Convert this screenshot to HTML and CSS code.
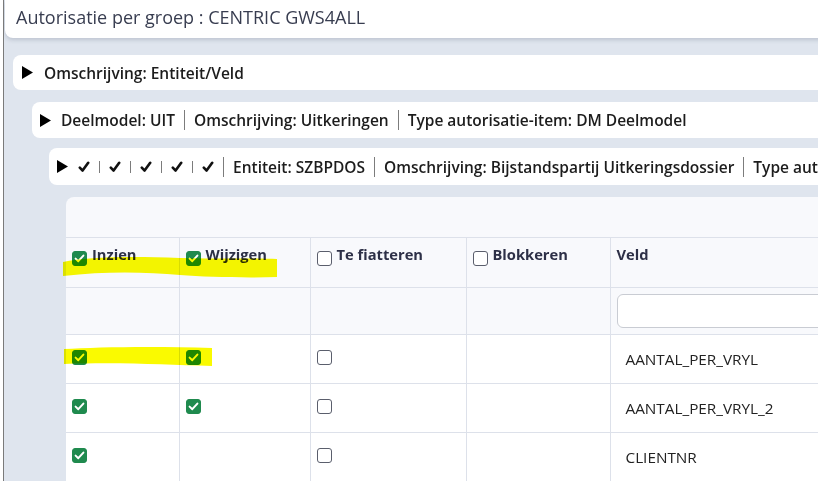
FILE: index.html
```html
<!DOCTYPE html>
<html lang="nl">
<head>
    <meta charset="UTF-8">
    <meta name="viewport" content="width=device-width, initial-scale=1.0">
    <title>Autorisatie per groep</title>
    <link rel="stylesheet" href="styles.css">
</head>
<body>
    <div class="frame">
        <div class="title-card">Autorisatie per groep : CENTRIC GWS4ALL</div>

        <!-- Niveau 1 -->
        <div class="bar bar-1">
            <svg class="caret" viewBox="0 0 11 13"><path d="M0 0 L11 6.5 L0 13 Z"/></svg>
            <span class="item">Omschrijving: Entiteit/Veld</span>
        </div>

        <!-- Niveau 2 -->
        <div class="bar bar-2">
            <svg class="caret" viewBox="0 0 11 13"><path d="M0 0 L11 6.5 L0 13 Z"/></svg>
            <span class="item">Deelmodel: UIT</span>
            <span class="item">Omschrijving: Uitkeringen</span>
            <span class="item">Type autorisatie-item: DM Deelmodel</span>
        </div>

        <!-- Niveau 3 -->
        <div class="bar bar-3">
            <svg class="caret" viewBox="0 0 11 13"><path d="M0 0 L11 6.5 L0 13 Z"/></svg>
            <span class="item"><svg class="tick" viewBox="0 0 12 12"><path d="M1.8 6.6 L4.6 9.6 L10.2 1.8"/></svg></span>
            <span class="item"><svg class="tick" viewBox="0 0 12 12"><path d="M1.8 6.6 L4.6 9.6 L10.2 1.8"/></svg></span>
            <span class="item"><svg class="tick" viewBox="0 0 12 12"><path d="M1.8 6.6 L4.6 9.6 L10.2 1.8"/></svg></span>
            <span class="item"><svg class="tick" viewBox="0 0 12 12"><path d="M1.8 6.6 L4.6 9.6 L10.2 1.8"/></svg></span>
            <span class="item"><svg class="tick" viewBox="0 0 12 12"><path d="M1.8 6.6 L4.6 9.6 L10.2 1.8"/></svg></span>
            <span class="item">Entiteit: SZBPDOS</span>
            <span class="item">Omschrijving: Bijstandspartij Uitkeringsdossier</span>
            <span class="item">Type auto</span>
        </div>

        <!-- Velden -->
        <div class="grid-card">
            <div class="toolbar"></div>
            <table class="grid">
                <colgroup>
                    <col style="width: 113px">
                    <col style="width: 131px">
                    <col style="width: 156px">
                    <col style="width: 144px">
                    <col>
                </colgroup>
                <thead>
                    <tr class="head-row">
                        <th><span class="cb on"></span>Inzien</th>
                        <th><span class="cb on"></span>Wijzigen</th>
                        <th><span class="cb"></span>Te fiatteren</th>
                        <th><span class="cb"></span>Blokkeren</th>
                        <th>Veld</th>
                    </tr>
                    <tr class="filter-row">
                        <td></td>
                        <td></td>
                        <td></td>
                        <td></td>
                        <td><input type="text" class="filter"></td>
                    </tr>
                </thead>
                <tbody>
                    <tr>
                        <td><span class="cb on"></span></td>
                        <td><span class="cb on"></span></td>
                        <td><span class="cb"></span></td>
                        <td></td>
                        <td class="name">AANTAL_PER_VRYL</td>
                    </tr>
                    <tr>
                        <td><span class="cb on"></span></td>
                        <td><span class="cb on"></span></td>
                        <td><span class="cb"></span></td>
                        <td></td>
                        <td class="name">AANTAL_PER_VRYL_2</td>
                    </tr>
                    <tr>
                        <td><span class="cb on"></span></td>
                        <td></td>
                        <td><span class="cb"></span></td>
                        <td></td>
                        <td class="name">CLIENTNR</td>
                    </tr>
                </tbody>
            </table>

            <!-- markeerstift -->
            <svg class="marker" viewBox="0 0 300 200" width="300" height="200">
                <path d="M-3 65 C 20 60, 60 59, 114 61 C 150 62, 190 61, 211 62 L 211 80 C 180 81, 140 80, 114 78 C 80 75, 40 74, -3 79 Z"/>
                <path d="M-2 152 C 30 150, 90 149, 146 151 L 146 169 C 100 168, 60 165, -2 167 Z"/>
            </svg>
        </div>
    </div>
</body>
</html>
```

FILE: styles.css
```css
* {
    margin: 0;
    padding: 0;
    box-sizing: border-box;
}

body {
    background: #fff;
    font-family: 'Open Sans', 'Noto Sans', sans-serif;
    width: 832px;
    height: 481px;
    overflow: hidden;
}

.frame {
    width: 815px;
    height: 481px;
    margin-left: 3px;
    border-left: 1px solid #7a7a7a;
    background: #dfe5ee;
    overflow: hidden;
}

.title-card {
    margin: 0 -40px 0 1px;
    height: 38px;
    padding: 5px 11px 0;
    line-height: 24px;
    font-size: 18px;
    font-weight: 500;
    color: #383d50;
    background: #fff;
    border-bottom-left-radius: 8px;
    box-shadow: 0 2px 4px rgba(40, 50, 80, 0.18);
    white-space: nowrap;
}

.bar {
    display: flex;
    align-items: center;
    margin-right: -40px;
    background: #fff;
    border-radius: 8px;
    white-space: nowrap;
    font-size: 15.5px;
    font-weight: 600;
    line-height: 20px;
    color: #1c1c1c;
}

.bar-1 {
    height: 35px;
    margin-top: 17px;
    margin-left: 9px;
    padding-left: 9px;
}

.bar-2 {
    height: 36px;
    margin-top: 12px;
    margin-left: 28px;
    padding-left: 8px;
}

.bar-3 {
    height: 37px;
    margin-top: 10px;
    margin-left: 45px;
    padding-left: 8px;
}

.caret {
    width: 11px;
    height: 13px;
    flex: none;
    margin-right: 11px;
    fill: #000;
}

.bar-2 .caret,
.bar-3 .caret {
    margin-right: 10px;
}

.item {
    display: flex;
    align-items: center;
    padding: 0 9px;
}

.item:first-of-type {
    padding-left: 0;
}

.item + .item {
    border-left: 1px solid #7c7c7c;
}

.tick {
    width: 12px;
    height: 12px;
    fill: none;
    stroke: #111;
    stroke-width: 2.6;
    stroke-linecap: round;
    stroke-linejoin: round;
}

.grid-card {
    position: relative;
    margin: 12px -60px 0 62px;
    background: #f8f9fc;
    border-top-left-radius: 8px;
}

.toolbar {
    height: 40px;
}

.grid {
    width: 800px;
    table-layout: fixed;
    border-collapse: collapse;
    font-size: 14.7px;
    line-height: 20px;
}

.grid th,
.grid td {
    text-align: left;
    vertical-align: top;
    border-top: 1px solid #dde1ea;
    border-left: 1px solid #dde1ea;
    white-space: nowrap;
}

.grid th:first-child,
.grid td:first-child {
    border-left: none;
}

.head-row th {
    height: 50px;
    padding: 6px 6px;
    font-weight: 700;
    color: #2d3047;
}

.filter-row td {
    height: 47px;
    padding: 6px 6px;
}

.filter {
    display: block;
    width: 100%;
    height: 34px;
    border: 1px solid #c9ccd3;
    border-radius: 6px;
    background: #fff;
    outline: none;
}

tbody tr {
    background: #fff;
}

tbody td {
    height: 49px;
    padding: 15px 6px 0;
    color: #222;
}

tbody td.name {
    padding: 14px 15px 0;
    font-size: 15.3px;
}

.cb {
    display: inline-block;
    width: 15px;
    height: 15px;
    border: 1px solid #5a5e6c;
    border-radius: 3px;
    background: #fff;
    vertical-align: -6px;
    margin-right: 5px;
}

tbody .cb {
    display: block;
    margin-right: 0;
}

.cb.on {
    border-color: #1f8a4e;
    background: #1f8a4e url("data:image/svg+xml,%3Csvg xmlns='http://www.w3.org/2000/svg' viewBox='0 0 15 15'%3E%3Cpath d='M3.6 7.6 L6.3 10.2 L11.4 4.6' fill='none' stroke='white' stroke-width='2' stroke-linecap='round' stroke-linejoin='round'/%3E%3C/svg%3E") center / 15px 15px no-repeat;
}

.marker {
    position: absolute;
    left: 0;
    top: 0;
    overflow: visible;
    pointer-events: none;
    mix-blend-mode: multiply;
    fill: #fafa00;
}
```
